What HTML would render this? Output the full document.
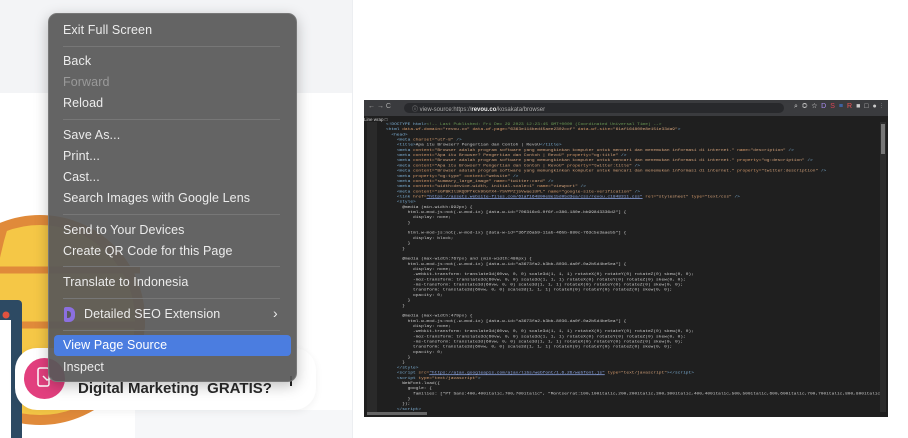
<!DOCTYPE html>
<html><head><meta charset="utf-8"><style>
*{margin:0;padding:0;box-sizing:border-box}
html,body{width:908px;height:438px;overflow:hidden}
body{background:#fff;position:relative;font-family:"Liberation Sans",sans-serif}
.abs{position:absolute}
.menu{left:48px;top:13px;width:249px;height:369px;background:rgba(88,88,88,0.93);border-radius:9px;border:1px solid #777;box-shadow:0 4px 14px rgba(0,0,0,.25)}
.it{position:absolute;left:14px;font-size:12.5px;color:#ececec;letter-spacing:0.1px}
.sep{position:absolute;left:14px;right:16px;height:1px;background:#777}
.codewrap{position:absolute;left:22px;top:22px;width:494px;height:290px;overflow:hidden}
.code{font-family:"Liberation Mono",monospace;font-size:4.5px;color:#ccc;transform:scaleY(0.74);transform-origin:0 0}
.code div{white-space:pre;height:7px;line-height:7px}
.t{color:#7fb3d9}.a{color:#d89b6a}.s{color:#d4a27a}.c{color:#6a9955}.u{color:#8fa9e8;text-decoration:underline}
</style></head><body>
<div class="abs" style="left:0;top:0;width:352px;height:93px;background:#f3f4f6"></div>
<div class="abs" style="left:352px;top:0;width:1px;height:438px;background:#eceef1"></div>
<div class="abs" style="left:135px;top:410px;width:217px;height:28px;background:#f6f7f9"></div>
<svg class="abs" style="left:0;top:0" width="352" height="438">
<circle cx="40" cy="320" r="100" fill="#f5c746" stroke="#e08a3a" stroke-width="10"/>
<path d="M5 225 Q-25 320 5 415" fill="none" stroke="#e08a3a" stroke-width="7"/>
<path d="M-50 270 H140 M-50 325 H145" stroke="#e08a3a" stroke-width="7"/>
<rect x="-10" y="300" width="32" height="150" rx="4" fill="#2d4a63"/>
<rect x="-10" y="320" width="21" height="120" fill="#fff"/>
<circle cx="6" cy="315" r="3.5" fill="#e0523f"/>
</svg>
<div class="abs" style="left:15px;top:348px;width:301px;height:62px;background:#fff;border-radius:22px;box-shadow:0 2px 8px rgba(0,0,0,.06)"></div>
<div class="abs" style="left:24px;top:358px;width:41px;height:41px;border-radius:50%;background:#e23f7e"></div>
<svg class="abs" style="left:34px;top:366px" width="22" height="24"><rect x="4" y="2" width="11" height="18" rx="2" fill="none" stroke="#fff" stroke-width="1.5"/><path d="M9 10 l4 4 l5-2" fill="none" stroke="#fff" stroke-width="1.5"/></svg>
<div class="abs" style="left:78px;top:380px;font-size:15px;font-weight:bold;color:#2a2a2a">Digital Marketing&nbsp; GRATIS?</div>
<div class="abs" style="left:290px;top:376px;width:2px;height:10px;background:#222"></div>

<div class="abs menu">
<div class="it" style="top:9px">Exit Full Screen</div>
<div class="sep" style="top:32px"></div>
<div class="it" style="top:40px">Back</div>
<div class="it" style="top:61px;color:#9a9a9a">Forward</div>
<div class="it" style="top:82px">Reload</div>
<div class="sep" style="top:105px"></div>
<div class="it" style="top:114px">Save As...</div>
<div class="it" style="top:135px">Print...</div>
<div class="it" style="top:156px">Cast...</div>
<div class="it" style="top:177px">Search Images with Google Lens</div>
<div class="sep" style="top:200px"></div>
<div class="it" style="top:209px">Send to Your Devices</div>
<div class="it" style="top:230px">Create QR Code for this Page</div>
<div class="sep" style="top:252px"></div>
<div class="it" style="top:261px">Translate to Indonesia</div>
<div class="sep" style="top:284px"></div>
<div class="abs" style="left:15px;top:293px;width:11px;height:15px;background:#8b6fe0;border-radius:2px 6px 6px 2px"></div>
<div class="abs" style="left:18px;top:297px;width:4px;height:7px;background:#5a5a5a;border-radius:0 3px 3px 0"></div>
<div class="it" style="top:293px;left:35px">Detailed SEO Extension</div>
<div class="it" style="top:291px;left:224px;font-size:14px">›</div>
<div class="sep" style="top:316px"></div>
<div class="abs" style="left:5px;top:321px;width:237px;height:21px;background:#4b7de0;border-radius:4px"></div>
<div class="it" style="top:324px;color:#fff">View Page Source</div>
<div class="it" style="top:346px">Inspect</div>
</div>

<div class="abs" style="left:364px;top:100px;width:524px;height:317px;background:#1f1f1f;overflow:hidden">
<div class="abs" style="left:0;top:0;width:524px;height:16px;background:#3a3b3e"></div>
<div class="abs" style="left:40px;top:3px;width:380px;height:10px;border-radius:5px;background:#28292c"></div>
<div class="abs" style="left:48px;top:4px;font-size:6px;color:#aaa">ⓘ view-source:https://<b style="color:#eee">revou.co</b>/kosakata/browser</div>
<div class="abs" style="left:4px;top:3px;font-size:7px;color:#aaa">← → C</div>
<div class="abs" style="left:430px;top:3px;font-size:7px;color:#ccc;letter-spacing:4px">⌕◎☆<span style="color:#a98cf0">D</span><span style="color:#d45">S</span><span style="color:#48f">≡</span><span style="color:#e55">R</span>■□●⋮</div>
<div class="abs" style="left:0;top:17px;font-size:4.5px;color:#ccc">Line wrap □</div>
<div class="abs" style="left:3px;top:22px;width:10px;height:290px;background:#2a2a2a"></div>
<div class="abs" style="left:516px;top:22px;width:6px;height:290px;background:#2c2c2c"></div>
<div class="abs" style="left:517px;top:24px;width:4px;height:30px;background:#777"></div>
<div class="abs" style="left:3px;top:312px;width:60px;height:3px;background:#666"></div>
<div class="codewrap"><div class="code">
<div><span class="t">&lt;!DOCTYPE html&gt;</span><span class="c">&lt;!-- Last Published: Fri Dec 29 2023 12:23:45 GMT+0000 (Coordinated Universal Time) --&gt;</span></div>
<div><span class="t">&lt;html</span> <span class="a">data-wf-domain=</span><span class="s">"revou.co"</span> <span class="a">data-wf-page=</span><span class="s">"6363e114bed45aee2302ccf"</span> <span class="a">data-wf-site=</span><span class="s">"61af164800e8e151e33da9"</span><span class="t">&gt;</span></div>
<div>  <span class="t">&lt;head&gt;</span></div>
<div>    <span class="t">&lt;meta</span> <span class="a">charset=</span><span class="s">"utf-8"</span> <span class="t">/&gt;</span></div>
<div>    <span class="t">&lt;title&gt;</span>Apa itu Browser? Pengertian dan Contoh | RevoU<span class="t">&lt;/title&gt;</span></div>
<div>    <span class="t">&lt;meta</span> <span class="a">content=</span><span class="s">"Browser adalah program software yang memungkinkan komputer untuk mencari dan menemukan informasi di internet."</span> <span class="a">name=</span><span class="s">"description"</span> <span class="t">/&gt;</span></div>
<div>    <span class="t">&lt;meta</span> <span class="a">content=</span><span class="s">"Apa itu Browser? Pengertian dan Contoh | RevoU"</span> <span class="a">property=</span><span class="s">"og:title"</span> <span class="t">/&gt;</span></div>
<div>    <span class="t">&lt;meta</span> <span class="a">content=</span><span class="s">"Browser adalah program software yang memungkinkan komputer untuk mencari dan menemukan informasi di internet."</span> <span class="a">property=</span><span class="s">"og:description"</span> <span class="t">/&gt;</span></div>
<div>    <span class="t">&lt;meta</span> <span class="a">content=</span><span class="s">"Apa itu Browser? Pengertian dan Contoh | RevoU"</span> <span class="a">property=</span><span class="s">"twitter:title"</span> <span class="t">/&gt;</span></div>
<div>    <span class="t">&lt;meta</span> <span class="a">content=</span><span class="s">"Browser adalah program software yang memungkinkan komputer untuk mencari dan menemukan informasi di internet."</span> <span class="a">property=</span><span class="s">"twitter:description"</span> <span class="t">/&gt;</span></div>
<div>    <span class="t">&lt;meta</span> <span class="a">property=</span><span class="s">"og:type"</span> <span class="a">content=</span><span class="s">"website"</span> <span class="t">/&gt;</span></div>
<div>    <span class="t">&lt;meta</span> <span class="a">content=</span><span class="s">"summary_large_image"</span> <span class="a">name=</span><span class="s">"twitter:card"</span> <span class="t">/&gt;</span></div>
<div>    <span class="t">&lt;meta</span> <span class="a">content=</span><span class="s">"width=device-width, initial-scale=1"</span> <span class="a">name=</span><span class="s">"viewport"</span> <span class="t">/&gt;</span></div>
<div>    <span class="t">&lt;meta</span> <span class="a">content=</span><span class="s">"sGPBKIl3KQDPfkCk9bGYX4-YSVPPZj5VwaeiUPL"</span> <span class="a">name=</span><span class="s">"google-site-verification"</span> <span class="t">/&gt;</span></div>
<div>    <span class="t">&lt;link</span> <span class="a">href=</span><span class="u">"https://assets.website-files.com/61af164800e8e15d05d3ea/css/revou.c1848311.css"</span> <span class="a">rel=</span><span class="s">"stylesheet"</span> <span class="a">type=</span><span class="s">"text/css"</span> <span class="t">/&gt;</span></div>
<div>    <span class="t">&lt;style&gt;</span></div>
<div>      @media (min-width:992px) {</div>
<div>        html.w-mod-js:not(.w-mod-ix) [data-w-id="706316c6-0f6f-c386-180e-bb99843336d2"] {</div>
<div>          display: none;</div>
<div>        }</div>
<div> </div>
<div>        html.w-mod-js:not(.w-mod-ix) [data-w-id="36f26a59-11ab-46bb-880c-763c5e3aae55"] {</div>
<div>          display: block;</div>
<div>        }</div>
<div>      }</div>
<div> </div>
<div>      @media (max-width:767px) and (min-width:480px) {</div>
<div>        html.w-mod-js:not(.w-mod-ix) [data-w-id="a3673fa2-b3bb-8036-da0f-0a2b5d4be5ea"] {</div>
<div>          display: none;</div>
<div>          -webkit-transform: translate3d(60vw, 0, 0) scale3d(1, 1, 1) rotateX(0) rotateY(0) rotateZ(0) skew(0, 0);</div>
<div>          -moz-transform: translate3d(60vw, 0, 0) scale3d(1, 1, 1) rotateX(0) rotateY(0) rotateZ(0) skew(0, 0);</div>
<div>          -ms-transform: translate3d(60vw, 0, 0) scale3d(1, 1, 1) rotateX(0) rotateY(0) rotateZ(0) skew(0, 0);</div>
<div>          transform: translate3d(60vw, 0, 0) scale3d(1, 1, 1) rotateX(0) rotateY(0) rotateZ(0) skew(0, 0);</div>
<div>          opacity: 0;</div>
<div>        }</div>
<div>      }</div>
<div> </div>
<div>      @media (max-width:479px) {</div>
<div>        html.w-mod-js:not(.w-mod-ix) [data-w-id="a3673fa2-b3bb-8036-da0f-0a2b5d4be5ea"] {</div>
<div>          display: none;</div>
<div>          -webkit-transform: translate3d(60vw, 0, 0) scale3d(1, 1, 1) rotateX(0) rotateY(0) rotateZ(0) skew(0, 0);</div>
<div>          -moz-transform: translate3d(60vw, 0, 0) scale3d(1, 1, 1) rotateX(0) rotateY(0) rotateZ(0) skew(0, 0);</div>
<div>          -ms-transform: translate3d(60vw, 0, 0) scale3d(1, 1, 1) rotateX(0) rotateY(0) rotateZ(0) skew(0, 0);</div>
<div>          transform: translate3d(60vw, 0, 0) scale3d(1, 1, 1) rotateX(0) rotateY(0) rotateZ(0) skew(0, 0);</div>
<div>          opacity: 0;</div>
<div>        }</div>
<div>      }</div>
<div>    <span class="t">&lt;/style&gt;</span></div>
<div>    <span class="t">&lt;script</span> <span class="a">src=</span><span class="u">"https://ajax.googleapis.com/ajax/libs/webfont/1.6.26/webfont.js"</span> <span class="a">type=</span><span class="s">"text/javascript"</span><span class="t">&gt;&lt;/script&gt;</span></div>
<div>    <span class="t">&lt;script</span> <span class="a">type=</span><span class="s">"text/javascript"</span><span class="t">&gt;</span></div>
<div>      WebFont.load({</div>
<div>        google: {</div>
<div>          families: ["PT Sans:400,400italic,700,700italic", "Montserrat:100,100italic,200,200italic,300,300italic,400,400italic,500,500italic,600,600italic,700,700italic,800,800italic"</div>
<div>        }</div>
<div>      });</div>
<div>    <span class="t">&lt;/script&gt;</span></div>
</div></div>
</div>
</body></html>
